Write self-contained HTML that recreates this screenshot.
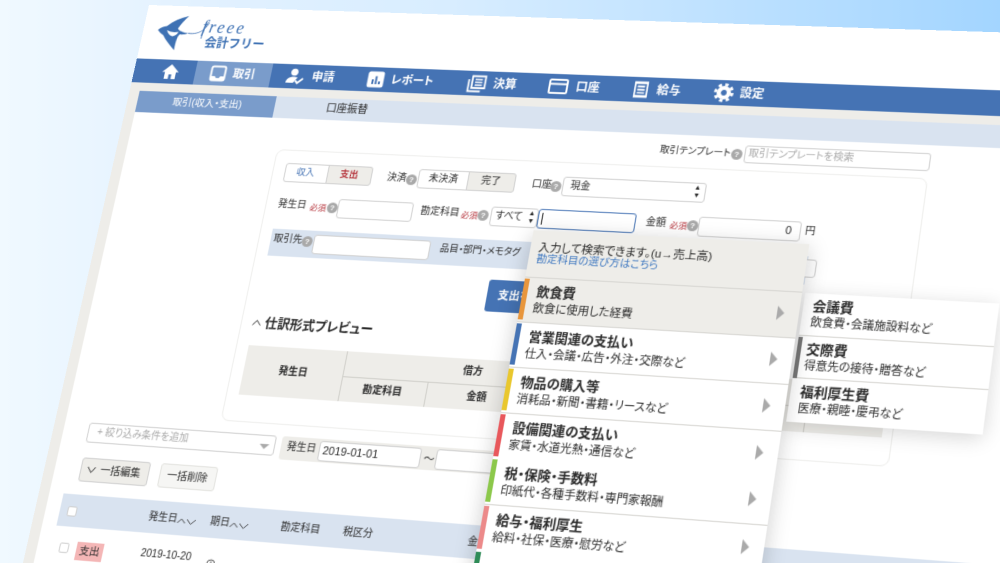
<!DOCTYPE html>
<html lang="ja"><head><meta charset="utf-8"><title>freee</title>
<style>
html,body{margin:0;padding:0;background:#e6f3ff;overflow:hidden}
#w{position:relative;width:1000px;height:563px;overflow:hidden;background:linear-gradient(90deg,#f0f9ff 0,#e2f1ff 20%,#d8edff 45%,#a3d5ff 100%);font-family:"Liberation Sans","Noto Sans CJK JP",sans-serif;color:#2b2b2b;font-feature-settings:"palt"}
#f{position:absolute;left:0;top:0;width:1000px;height:563px;overflow:hidden;filter:blur(.35px)}
#p{position:absolute;left:0;top:0;width:1400px;height:900px;background:#fff;transform-origin:0 0;transform:matrix3d(.888,.02848,0,-.0000816,-.2181,.8994,0,-.0000996,0,0,1,0,149,5,0,1)}
.b{position:absolute;box-sizing:border-box}
.in{position:absolute;box-sizing:border-box;background:#fff;border:1px solid #cfcfcf;border-radius:3px}
.t{position:absolute;white-space:nowrap;line-height:16px;font-size:10px}
.c{transform:translateX(-50%)}
.n{color:#fff;font-size:12px;font-weight:700;top:64px}
.h{position:absolute;width:11px;height:11px;border-radius:50%;background:#a9a9a9;color:#fff;font-size:8px;line-height:11px;text-align:center;font-weight:700}
.r{color:#b5343c;font-size:8.5px}
.m{font-weight:700}
svg{position:absolute;overflow:visible}
.ti{font-size:13px;font-weight:700;left:14px;top:6px}
.de{font-size:11.3px;left:13px;top:23px}
.row{position:absolute;left:0;width:272px;height:45px;box-sizing:border-box;border-bottom:1px solid #d6d5d1;background:#fff}
.bar{position:absolute;left:0;top:1px;width:5px;height:41px}
.ar{position:absolute;left:251px;top:14px;width:0;height:0;border-left:7px solid #aaa;border-top:7px solid transparent;border-bottom:7px solid transparent}
.sr{position:absolute;left:0;width:183px;height:41.5px;box-sizing:border-box;border-bottom:1px solid #d6d5d1;background:#fff}
.sr .t.ti{left:9px;top:5px}.sr .t.de{left:9px;top:21px;font-size:11px}
</style></head><body>
<div id="w"><div id="f"><div id="p">
<!-- logo -->
<svg style="left:0;top:0" width="110" height="58" viewBox="0 0 110 58">
<path d="M16 27C19 24 22 23 25 22.500C31 17 38 13 47 10.800C43 15 40 20 37.700 24.400C38 27 45 29 50 29.500C47 31 44 31.500 41 31C39 33 38 38 38.500 48.400C33 44 27 38 23 32.500C20 31 18 29 16 27Z" fill="#3f72b4"/>
<path d="M26 27C30 29 35 29.500 39 28.500C38.500 31 36 33 33.500 33.500C30 33 27.500 30 26 27Z" fill="#fff"/>
<path d="M50 29.500C56 30.500 62 29 66 25C69 21 71 18 70 17C68 17 66 24 65 35" fill="none" stroke="#3f72b4" stroke-width=".9"/>
</svg>
<span class="t" style="left:64px;top:14px;font:italic 18px/16px 'Liberation Serif',serif;letter-spacing:2.500px;color:#3f72b4">freee</span>
<span class="t" style="left:70px;top:31px;font-size:13px;font-weight:700;color:#3f72b4;font-feature-settings:normal">会計フリー</span>
<!-- nav -->
<div class="b" style="left:0;top:85px;width:1400px;height:815px;background:#eeede9"></div>
<div class="b" style="left:0;top:58.500px;width:1400px;height:26.500px;background:#4573b4"></div>
<div class="b" style="left:67px;top:58.500px;width:82px;height:26.500px;background:#7a9ccb"></div>
<svg style="left:30px;top:62px" width="20" height="20" viewBox="0 0 20 20"><path d="M10 2L1 10.500h3V18h4.500v-5h3v5H16v-7.500h3z" fill="#fff"/></svg>
<svg style="left:82px;top:62px" width="20" height="20" viewBox="0 0 20 20"><rect x="2.500" y="2.500" width="15" height="15" rx="2" fill="none" stroke="#fff" stroke-width="2"/><path d="M3 13h4l1.500 2h3l1.500-2h4v5H3z" fill="#fff"/></svg>
<span class="t n" style="left:108px">取引</span>
<svg style="left:165px;top:62px" width="20" height="20" viewBox="0 0 20 20"><circle cx="9" cy="5.500" r="3.800" fill="#fff"/><path d="M1 17c0-4 3-6.500 8-6.500 1.500 0 3 .3 4 .8L9 17z" fill="#fff"/><path d="M11 14.500l2.500 2.500 5.500-5" fill="none" stroke="#fff" stroke-width="2"/></svg>
<span class="t n" style="left:193px">申請</span>
<svg style="left:251px;top:62px" width="20" height="20" viewBox="0 0 20 20"><rect x="1.500" y="1.500" width="17" height="17" rx="2.500" fill="#fff"/><path d="M6 10h2v5H6zM9.500 6.500h2V15h-2zM13 12h2v3h-2z" fill="#4573b4"/></svg>
<span class="t n" style="left:277px">レポート</span>
<svg style="left:357px;top:62px" width="20" height="20" viewBox="0 0 20 20"><path d="M5 2.500h13.500v12.500H5zM1.500 6v12.500h13" fill="none" stroke="#fff" stroke-width="1.800"/><path d="M8 6h7.500M8 9h7.500M8 12h7.500" stroke="#fff" stroke-width="1.600"/></svg>
<span class="t n" style="left:384px">決算</span>
<svg style="left:441px;top:62px" width="20" height="20" viewBox="0 0 20 20"><rect x="1" y="3" width="18" height="14" rx="1.500" fill="none" stroke="#fff" stroke-width="2"/><path d="M1 7.500h18" stroke="#fff" stroke-width="2"/></svg>
<span class="t n" style="left:469px">口座</span>
<svg style="left:525px;top:62px" width="20" height="20" viewBox="0 0 20 20"><path d="M3 1.500h14v17H3z" fill="#fff"/><path d="M5.500 5h9v10h-9zM5.500 8.500h9M5.500 12h9" fill="none" stroke="#4573b4" stroke-width="1.600"/></svg>
<span class="t n" style="left:551px">給与</span>
<svg style="left:608px;top:62px" width="20" height="20" viewBox="0 0 20 20"><circle cx="10" cy="10" r="5" fill="none" stroke="#fff" stroke-width="4.200"/><circle cx="10" cy="10" r="8.300" fill="none" stroke="#fff" stroke-width="3" stroke-dasharray="3.300 3.220"/></svg>
<span class="t n" style="left:634px">設定</span>
<!-- white body -->
<div class="b" style="left:11px;top:94px;width:1389px;height:806px;background:#fff"></div>
<div class="b" style="left:160px;top:94px;width:1240px;height:23px;background:#d9e3f0"></div>
<div class="b" style="left:11px;top:94px;width:149px;height:23px;background:#7a9ccb"></div>
<span class="t c" style="left:87px;top:97px;color:#fff;font-size:10.500px">取引(収入・支出)</span>
<span class="t c" style="left:237px;top:97px;font-size:11px">口座振替</span>
<!-- template -->
<span class="t" style="left:564px;top:126px;font-size:9.600px">取引テンプレート</span>
<span class="h" style="left:635px;top:129px">?</span>
<div class="in" style="left:648px;top:125px;width:180px;height:18px"></div>
<span class="t" style="left:652px;top:126px;color:#aaa">取引テンプレートを検索</span>
<!-- card -->
<div class="b" style="left:172px;top:150px;width:656px;height:280px;border:1px solid #eeeeec;border-radius:8px;background:#fff"></div>
<div class="in" style="left:185px;top:164px;width:46px;height:20px;border-radius:3px 0 0 3px"></div>
<div class="in" style="left:230px;top:164px;width:47px;height:20px;background:#eeede9;border-radius:0 3px 3px 0"></div>
<span class="t c" style="left:207px;top:166px;color:#4573b4;font-size:9.500px">収入</span>
<span class="t c m" style="left:253px;top:166px;color:#b5343c;font-size:9.500px">支出</span>
<span class="t" style="left:293px;top:167px">決済</span><span class="h" style="left:313px;top:170px">?</span>
<div class="in" style="left:325px;top:164px;width:52px;height:20px;border-radius:3px 0 0 3px"></div>
<div class="in" style="left:376px;top:164px;width:49px;height:20px;background:#eeede9;border-radius:0 3px 3px 0"></div>
<span class="t c" style="left:351px;top:166px">未決済</span><span class="t c" style="left:400px;top:166px">完了</span>
<span class="t" style="left:442px;top:167px">口座</span><span class="h" style="left:461px;top:170px">?</span>
<div class="in" style="left:473px;top:165px;width:143px;height:20px"></div>
<span class="t" style="left:481px;top:167px">現金</span><span class="t" style="left:604px;top:167px;font-size:7px;line-height:8px">▲<br>▼</span>
<span class="t" style="left:185px;top:200px">発生日</span><span class="t r" style="left:219px;top:201px">必須</span><span class="h" style="left:237px;top:203px">?</span>
<div class="in" style="left:248px;top:199px;width:78px;height:20px"></div>
<span class="t" style="left:334px;top:200px">勘定科目</span><span class="t r" style="left:376px;top:201px">必須</span><span class="h" style="left:393px;top:203px">?</span>
<div class="in" style="left:406px;top:199px;width:48px;height:20px"></div>
<span class="t" style="left:411px;top:201px">すべて</span><span class="t" style="left:444px;top:201px;font-size:7px;line-height:8px">▲<br>▼</span>
<div class="in" style="left:454px;top:199px;width:98px;height:20px;border:1px solid #4573b4"></div>
<div class="b" style="left:458px;top:203px;width:1px;height:12px;background:#222"></div>
<span class="t" style="left:562px;top:200px">金額</span><span class="t r" style="left:586px;top:201px">必須</span><span class="h" style="left:603px;top:203px">?</span>
<div class="in" style="left:614px;top:199px;width:100px;height:20px"></div>
<span class="t" style="left:699px;top:201px;font-size:11px">0</span><span class="t" style="left:718px;top:201px">円</span>
<div class="b" style="left:185px;top:233px;width:540px;height:28px;background:#d9e3f0"></div>
<span class="t" style="left:188px;top:236px">取引先</span><span class="h" style="left:218px;top:239px">?</span>
<div class="in" style="left:230px;top:237px;width:121px;height:20px"></div>
<span class="t" style="left:361px;top:237px;font-size:9.500px">品目・部門・メモタグ</span>
<div class="in" style="left:640px;top:236px;width:94px;height:18px"></div>
<div class="b" style="left:417px;top:273px;width:166px;height:32px;background:#4573b4;border-radius:3px"></div>
<span class="t m" style="left:428px;top:281px;color:#fff;font-size:11px">支出を登録</span>
<svg style="left:184px;top:326px" width="10" height="8"><path d="M.5 6.500L4.500 1.500 8.500 6.500" fill="none" stroke="#333" stroke-width="1"/></svg>
<span class="t m" style="left:197px;top:322px;font-size:13px">仕訳形式プレビュー</span>
<!-- preview table -->
<div class="b" style="left:185px;top:353px;width:633px;height:50px;background:#eeede9"></div>
<div class="b" style="left:287px;top:353px;width:1px;height:50px;background:#cfcec9"></div>
<div class="b" style="left:287px;top:378px;width:531px;height:1px;background:#cfcec9"></div>
<div class="b" style="left:374px;top:378px;width:1px;height:25px;background:#cfcec9"></div>
<div class="b" style="left:476px;top:378px;width:1px;height:25px;background:#cfcec9"></div>
<div class="b" style="left:744px;top:378px;width:1px;height:25px;background:#cfcec9"></div>
<span class="t c m" style="left:236px;top:370px">発生日</span>
<span class="t c m" style="left:417px;top:358px">借方</span>
<span class="t c m" style="left:330px;top:383px">勘定科目</span>
<span class="t c m" style="left:425px;top:383px">金額</span>
<!-- filters -->
<div class="in" style="left:37px;top:441px;width:196px;height:20px"></div>
<span class="t" style="left:47px;top:443px;color:#aaa">+ 絞り込み条件を追加</span>
<div class="b" style="left:217px;top:450px;border-left:5px solid transparent;border-right:5px solid transparent;border-top:5px solid #aaa"></div>
<div class="b" style="left:239px;top:441px;width:290px;height:23px;background:#eeede9;border-radius:3px"></div>
<span class="t" style="left:245px;top:444px">発生日</span>
<div class="in" style="left:278px;top:443px;width:103px;height:20px"></div>
<span class="t" style="left:282px;top:445px;font-size:11px">2019-01-01</span>
<span class="t" style="left:384px;top:446px;font-size:11px">〜</span>
<div class="in" style="left:396px;top:443px;width:105px;height:20px"></div>
<!-- buttons -->
<div class="in" style="left:38px;top:476px;width:72px;height:24px;background:#eeede9"></div>
<svg style="left:45px;top:484px" width="10" height="8"><path d="M.5 1L4.500 6.500 8.500 1" fill="none" stroke="#333" stroke-width="1"/></svg>
<span class="t" style="left:59px;top:480px;font-size:10.500px">一括編集</span>
<div class="in" style="left:121px;top:476px;width:59px;height:24px;background:#f6f6f4;border-color:#e2e2de"></div>
<span class="t c" style="left:150px;top:480px;font-size:10.500px">一括削除</span>
<!-- list table -->
<div class="b" style="left:26px;top:513px;width:1374px;height:32px;background:#d9e3f0"></div>
<div class="in" style="left:34px;top:525px;width:10px;height:10px;border-radius:2px"></div>
<span class="t" style="left:119px;top:522px">発生日</span>
<svg style="left:149px;top:527px" width="20" height="8"><path d="M.5 6L4.500 2 8.500 6M10 2L14.500 6.500 19 2" fill="none" stroke="#333" stroke-width=".9"/></svg>
<span class="t" style="left:183px;top:522px">期日</span>
<svg style="left:203px;top:527px" width="20" height="8"><path d="M.5 6L4.500 2 8.500 6M10 2L14.500 6.500 19 2" fill="none" stroke="#333" stroke-width=".9"/></svg>
<span class="t" style="left:255px;top:522px">勘定科目</span>
<span class="t" style="left:318px;top:522px">税区分</span>
<span class="t" style="left:442px;top:522px">金額</span>
<div class="in" style="left:34px;top:561px;width:10px;height:10px;border-radius:2px"></div>
<div class="b" style="left:52px;top:559px;width:28px;height:18px;background:#f4b6b6"></div>
<span class="t c" style="left:66px;top:560px;font-size:10.500px">支出</span>
<span class="t" style="left:119px;top:558px;font-size:10.200px">2019-10-20</span>
<svg style="left:187px;top:565px" width="10" height="10"><circle cx="5" cy="5" r="4" fill="none" stroke="#333" stroke-width=".8"/><path d="M5 2.500V5h2" fill="none" stroke="#333" stroke-width=".8"/></svg>
<span class="t" style="left:255px;top:566px">旅費交通費</span>
<!-- submenu -->
<div class="b" style="left:727px;top:269px;width:183px;height:125px;background:#fff;box-shadow:0 4px 18px rgba(0,0,0,.16)">
<div class="sr" style="top:0"><span class="t ti">会議費</span><span class="t de">飲食費・会議施設料など</span></div>
<div class="sr" style="top:41.500px"><div class="bar" style="width:4px;height:40px;background:#777"></div><span class="t ti">交際費</span><span class="t de">得意先の接待・贈答など</span></div>
<div class="sr" style="top:83px;border:0"><span class="t ti">福利厚生費</span><span class="t de">医療・親睦・慶弔など</span></div>
</div>
<!-- dropdown -->
<div class="b" style="left:452px;top:221px;width:272px;height:400px;background:#fff;box-shadow:0 4px 20px rgba(0,0,0,.2)">
<div class="row" style="top:0;height:48px;background:#eeede9"><span class="t" style="left:8px;top:10px;font-size:11.500px">入力して検索できます。(u→売上高)</span><span class="t" style="left:8px;top:21px;font-size:10.500px;color:#3f78c0">勘定科目の選び方はこちら</span></div>
<div class="row" style="top:48px;background:#eeede9"><div class="bar" style="background:#e8963c"></div><span class="t ti">飲食費</span><span class="t de">飲食に使用した経費</span><div class="ar"></div></div>
<div class="row" style="top:93px"><div class="bar" style="background:#4573b4"></div><span class="t ti">営業関連の支払い</span><span class="t de">仕入・会議・広告・外注・交際など</span><div class="ar"></div></div>
<div class="row" style="top:138px"><div class="bar" style="background:#e9c72e"></div><span class="t ti">物品の購入等</span><span class="t de">消耗品・新聞・書籍・リースなど</span><div class="ar"></div></div>
<div class="row" style="top:182.500px"><div class="bar" style="background:#e8585c"></div><span class="t ti">設備関連の支払い</span><span class="t de">家賃・水道光熱・通信など</span><div class="ar"></div></div>
<div class="row" style="top:227px"><div class="bar" style="background:#8cc84b"></div><span class="t ti">税・保険・手数料</span><span class="t de">印紙代・各種手数料・専門家報酬</span><div class="ar"></div></div>
<div class="row" style="top:271.500px"><div class="bar" style="background:#ec8a8a"></div><span class="t ti">給与・福利厚生</span><span class="t de">給料・社保・医療・慰労など</span><div class="ar"></div></div>
<div class="row" style="top:316px"><div class="bar" style="background:#2e8b57"></div></div>
</div>
</div></div></div>
</body></html>
